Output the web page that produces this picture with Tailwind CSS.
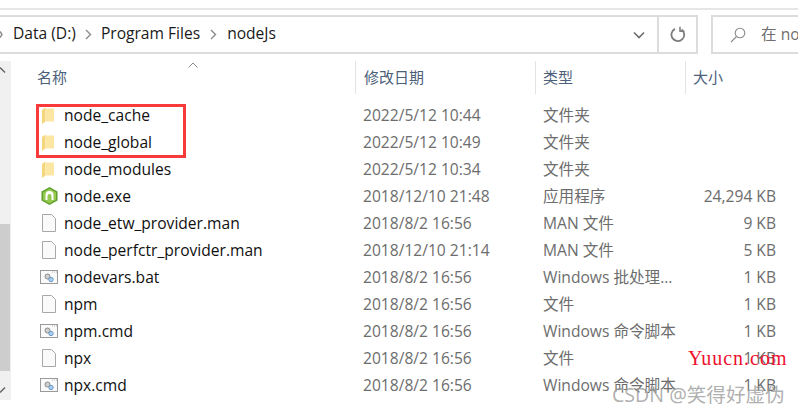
<!DOCTYPE html>
<html lang="zh-CN">
  <head>
    <meta charset="UTF-8" />
    <title>nodeJs</title>
    <script src="https://cdn.jsdelivr.net/npm/@tailwindcss/browser@4"></script>
  </head>
  <body class="relative w-[798px] h-[413px] overflow-hidden bg-white font-['Open_Sans','Noto_Sans_CJK_SC',sans-serif] text-[15.6px]">
    <!-- toolbar edge -->
    <div class="h-[10px] border-b-2 border-[#e6e6e6]"></div>

    <!-- address bar -->
    <div class="flex h-[39px] mt-[5px] gap-[13px] text-[#1a1a1a]">
      <div class="flex w-[698px] border-y-2 border-r-2 border-[#dcdcdc]">
        <div class="flex flex-1 items-center pb-[1px]">
          <svg class="shrink-0 mr-[10px]" width="3" height="7" viewBox="0 0 3 7" fill="none" stroke="#8a8a8a" stroke-width="1.4"><path d="M0 0.5l2 3-2 3" /></svg>
          <span>Data (D:)</span>
          <svg class="ml-[9px] mr-[9px] shrink-0" width="7" height="11" viewBox="0 0 7 11" fill="none" stroke="#8a8a8a" stroke-width="1.4"><path d="M1 1l4.5 4.5L1 10" /></svg>
          <span>Program Files</span>
          <svg class="ml-[10px] mr-[10px] shrink-0" width="7" height="11" viewBox="0 0 7 11" fill="none" stroke="#8a8a8a" stroke-width="1.4"><path d="M1 1l4.5 4.5L1 10" /></svg>
          <span>nodeJs</span>
        </div>
        <div class="flex w-[25px] mr-[6px] items-center justify-center">
          <svg width="12" height="8" viewBox="0 0 12 8" fill="none" stroke="#6f6f6f" stroke-width="1.7"><path d="M1 1.5l5 5 5-5" /></svg>
        </div>
        <div class="flex w-[39px] items-center justify-center border-l-2 border-[#dcdcdc]">
          <svg width="16" height="17" viewBox="0 0 16 17" fill="none" stroke="#7c7c7c" stroke-width="1.8"><path d="M11.5 3.4A6.4 6.4 0 1 1 5 2.9" /><path d="M10 0.8v4.4h4.4" stroke-width="1.5" /></svg>
        </div>
      </div>
      <div class="flex flex-1 items-center border-y-2 border-l-2 border-[#dcdcdc] pl-[17px] text-[#6f6f6f] whitespace-nowrap overflow-hidden">
        <svg class="shrink-0" width="16" height="16" viewBox="0 0 16 16" fill="none" stroke="#8a8a8a" stroke-width="1.1"><circle cx="10" cy="6" r="4.8" /><path d="M6.5 9.5L1 15" /></svg>
        <span class="ml-[15px]">在 no</span>
      </div>
    </div>

    <div class="flex mt-[7px]">
      <!-- scrollbar -->
      <div class="relative flex flex-col w-[11px] h-[339px] bg-[#f0f0f0]">
        <svg class="absolute left-0 top-[6px]" width="6" height="6" viewBox="0 0 6 6" fill="none" stroke="#606060" stroke-width="1.4"><path d="M0 0.5l5 5" /></svg>
        <div class="mt-[163px] h-[147px] w-[10px] bg-[#cdcdcd]"></div>
        <svg class="absolute left-0 top-[326px]" width="6" height="6" viewBox="0 0 6 6" fill="none" stroke="#606060" stroke-width="1.4"><path d="M0 5.5l5-5" /></svg>
      </div>

      <div class="flex-1">
        <!-- column headers -->
        <div class="relative grid grid-cols-[344px_180px_150px_100px] h-[33px] items-center text-[#4c607a] text-[15px]">
          <div class="pl-[26px]">名称</div>
          <div class="pl-[8px] border-l border-[#e3e3e3] h-full flex items-center">修改日期</div>
          <div class="pl-[7px] border-l border-[#e3e3e3] h-full flex items-center">类型</div>
          <div class="pl-[7px] border-l border-[#e3e3e3] h-full flex items-center">大小</div>
          <svg class="absolute left-[177px] top-[1px]" width="10" height="6" viewBox="0 0 10 6" fill="none" stroke="#8a8a8a"><path d="M0.5 5.5L5 1l4.5 4.5" /></svg>
        </div>

        <!-- file rows -->
        <div class="mt-[8px] text-[#6d6d6d]">
          <div class="grid grid-cols-[344px_180px_150px_91px] h-[27px] items-center">
            <div class="flex items-center pl-[31px] text-[#101010]"><svg class="w-[12px] h-[17px] mr-[10px]" viewBox="0 0 12 17"><path d="M0 3L3.5 0.5V14.5L0 17Z" fill="#f6d67c" /><path d="M3.5 1.5H12V14.5H3.5Z" fill="#fce6a4" /></svg>node_cache</div>
            <div class="pl-[8px]">2022/5/12 10:44</div>
            <div class="pl-[8px]">文件夹</div>
            <div class="text-right"></div>
          </div>
          <div class="grid grid-cols-[344px_180px_150px_91px] h-[27px] items-center">
            <div class="flex items-center pl-[31px] text-[#101010]"><svg class="w-[12px] h-[17px] mr-[10px]" viewBox="0 0 12 17"><path d="M0 3L3.5 0.5V14.5L0 17Z" fill="#f6d67c" /><path d="M3.5 1.5H12V14.5H3.5Z" fill="#fce6a4" /></svg>node_global</div>
            <div class="pl-[8px]">2022/5/12 10:49</div>
            <div class="pl-[8px]">文件夹</div>
            <div class="text-right"></div>
          </div>
          <div class="grid grid-cols-[344px_180px_150px_91px] h-[27px] items-center">
            <div class="flex items-center pl-[31px] text-[#101010]"><svg class="w-[12px] h-[17px] mr-[10px]" viewBox="0 0 12 17"><path d="M0 3L3.5 0.5V14.5L0 17Z" fill="#f6d67c" /><path d="M3.5 1.5H12V14.5H3.5Z" fill="#fce6a4" /></svg>node_modules</div>
            <div class="pl-[8px]">2022/5/12 10:34</div>
            <div class="pl-[8px]">文件夹</div>
            <div class="text-right"></div>
          </div>
          <div class="grid grid-cols-[344px_180px_150px_91px] h-[27px] items-center">
            <div class="flex items-center pl-[30px] text-[#101010]"><svg class="w-[17px] h-[18px] mr-[6px]" viewBox="0 0 17 18"><path d="M8.5 0L16.5 4.5V13.5L8.5 18L0.5 13.5V4.5Z" fill="#5f9e2a" /><path d="M8.5 1.5L15 5.2V12.8L8.5 16.5L2 12.8V5.2Z" fill="#93c94e" /><path d="M4.5 13V8A4 4 0 0 1 12.5 8V13H10.5V9A2 2 0 0 0 6.5 9V13Z" fill="#fff" /></svg>node.exe</div>
            <div class="pl-[8px]">2018/12/10 21:48</div>
            <div class="pl-[8px]">应用程序</div>
            <div class="text-right">24,294 KB</div>
          </div>
          <div class="grid grid-cols-[344px_180px_150px_91px] h-[27px] items-center">
            <div class="flex items-center pl-[31px] text-[#101010]"><svg class="w-[14px] h-[18px] mr-[8px]" viewBox="0 0 14 18" fill="#fafafa" stroke="#a8a8a8"><path d="M0.5 0.5H9.5L13.5 4.5V17.5H0.5Z" /></svg>node_etw_provider.man</div>
            <div class="pl-[8px]">2018/8/2 16:56</div>
            <div class="pl-[8px]">MAN 文件</div>
            <div class="text-right">9 KB</div>
          </div>
          <div class="grid grid-cols-[344px_180px_150px_91px] h-[27px] items-center">
            <div class="flex items-center pl-[31px] text-[#101010]"><svg class="w-[14px] h-[18px] mr-[8px]" viewBox="0 0 14 18" fill="#fafafa" stroke="#a8a8a8"><path d="M0.5 0.5H9.5L13.5 4.5V17.5H0.5Z" /></svg>node_perfctr_provider.man</div>
            <div class="pl-[8px]">2018/12/10 21:14</div>
            <div class="pl-[8px]">MAN 文件</div>
            <div class="text-right">5 KB</div>
          </div>
          <div class="grid grid-cols-[344px_180px_150px_91px] h-[27px] items-center">
            <div class="flex items-center pl-[29px] text-[#101010]"><svg class="w-[18px] h-[14px] mr-[6px]" viewBox="0 0 18 14"><rect x="0.5" y="0.5" width="17" height="13" fill="#fafafa" stroke="#9a9a9a" /><path d="M12 2h1M14 2h1M16 2h1" stroke="#b5b5b5" /><circle cx="7.5" cy="6.5" r="2.5" fill="#d0d0d0" stroke="#8a8a8a" /><circle cx="11" cy="9.5" r="2.2" fill="#a9cdee" stroke="#6d9ac4" /></svg>nodevars.bat</div>
            <div class="pl-[8px]">2018/8/2 16:56</div>
            <div class="pl-[8px]">Windows 批处理...</div>
            <div class="text-right">1 KB</div>
          </div>
          <div class="grid grid-cols-[344px_180px_150px_91px] h-[27px] items-center">
            <div class="flex items-center pl-[31px] text-[#101010]"><svg class="w-[14px] h-[18px] mr-[8px]" viewBox="0 0 14 18" fill="#fafafa" stroke="#a8a8a8"><path d="M0.5 0.5H9.5L13.5 4.5V17.5H0.5Z" /></svg>npm</div>
            <div class="pl-[8px]">2018/8/2 16:56</div>
            <div class="pl-[8px]">文件</div>
            <div class="text-right">1 KB</div>
          </div>
          <div class="grid grid-cols-[344px_180px_150px_91px] h-[27px] items-center">
            <div class="flex items-center pl-[29px] text-[#101010]"><svg class="w-[18px] h-[14px] mr-[6px]" viewBox="0 0 18 14"><rect x="0.5" y="0.5" width="17" height="13" fill="#fafafa" stroke="#9a9a9a" /><path d="M12 2h1M14 2h1M16 2h1" stroke="#b5b5b5" /><circle cx="7.5" cy="6.5" r="2.5" fill="#d0d0d0" stroke="#8a8a8a" /><circle cx="11" cy="9.5" r="2.2" fill="#a9cdee" stroke="#6d9ac4" /></svg>npm.cmd</div>
            <div class="pl-[8px]">2018/8/2 16:56</div>
            <div class="pl-[8px]">Windows 命令脚本</div>
            <div class="text-right">1 KB</div>
          </div>
          <div class="grid grid-cols-[344px_180px_150px_91px] h-[27px] items-center">
            <div class="flex items-center pl-[31px] text-[#101010]"><svg class="w-[14px] h-[18px] mr-[8px]" viewBox="0 0 14 18" fill="#fafafa" stroke="#a8a8a8"><path d="M0.5 0.5H9.5L13.5 4.5V17.5H0.5Z" /></svg>npx</div>
            <div class="pl-[8px]">2018/8/2 16:56</div>
            <div class="pl-[8px]">文件</div>
            <div class="text-right">1 KB</div>
          </div>
          <div class="grid grid-cols-[344px_180px_150px_91px] h-[27px] items-center">
            <div class="flex items-center pl-[29px] text-[#101010]"><svg class="w-[18px] h-[14px] mr-[6px]" viewBox="0 0 18 14"><rect x="0.5" y="0.5" width="17" height="13" fill="#fafafa" stroke="#9a9a9a" /><path d="M12 2h1M14 2h1M16 2h1" stroke="#b5b5b5" /><circle cx="7.5" cy="6.5" r="2.5" fill="#d0d0d0" stroke="#8a8a8a" /><circle cx="11" cy="9.5" r="2.2" fill="#a9cdee" stroke="#6d9ac4" /></svg>npx.cmd</div>
            <div class="pl-[8px]">2018/8/2 16:56</div>
            <div class="pl-[8px]">Windows 命令脚本</div>
            <div class="text-right">1 KB</div>
          </div>
        </div>
      </div>
    </div>

    <!-- annotation and watermarks -->
    <div class="absolute left-[36px] top-[104px] w-[150px] h-[54px] border-[3px] border-[#f83a3a]"></div>
    <div class="absolute left-[688px] top-[347px] font-['Liberation_Serif',serif] text-[20px] leading-[22px] text-[#f0102c] tracking-[1px]">Yuucn.com</div>
    <div class="absolute left-[612px] top-[382px] text-[19.6px] leading-[26px] text-[#9a9a9a]/80">CSDN @笑得好虚伪</div>
  </body>
</html>
